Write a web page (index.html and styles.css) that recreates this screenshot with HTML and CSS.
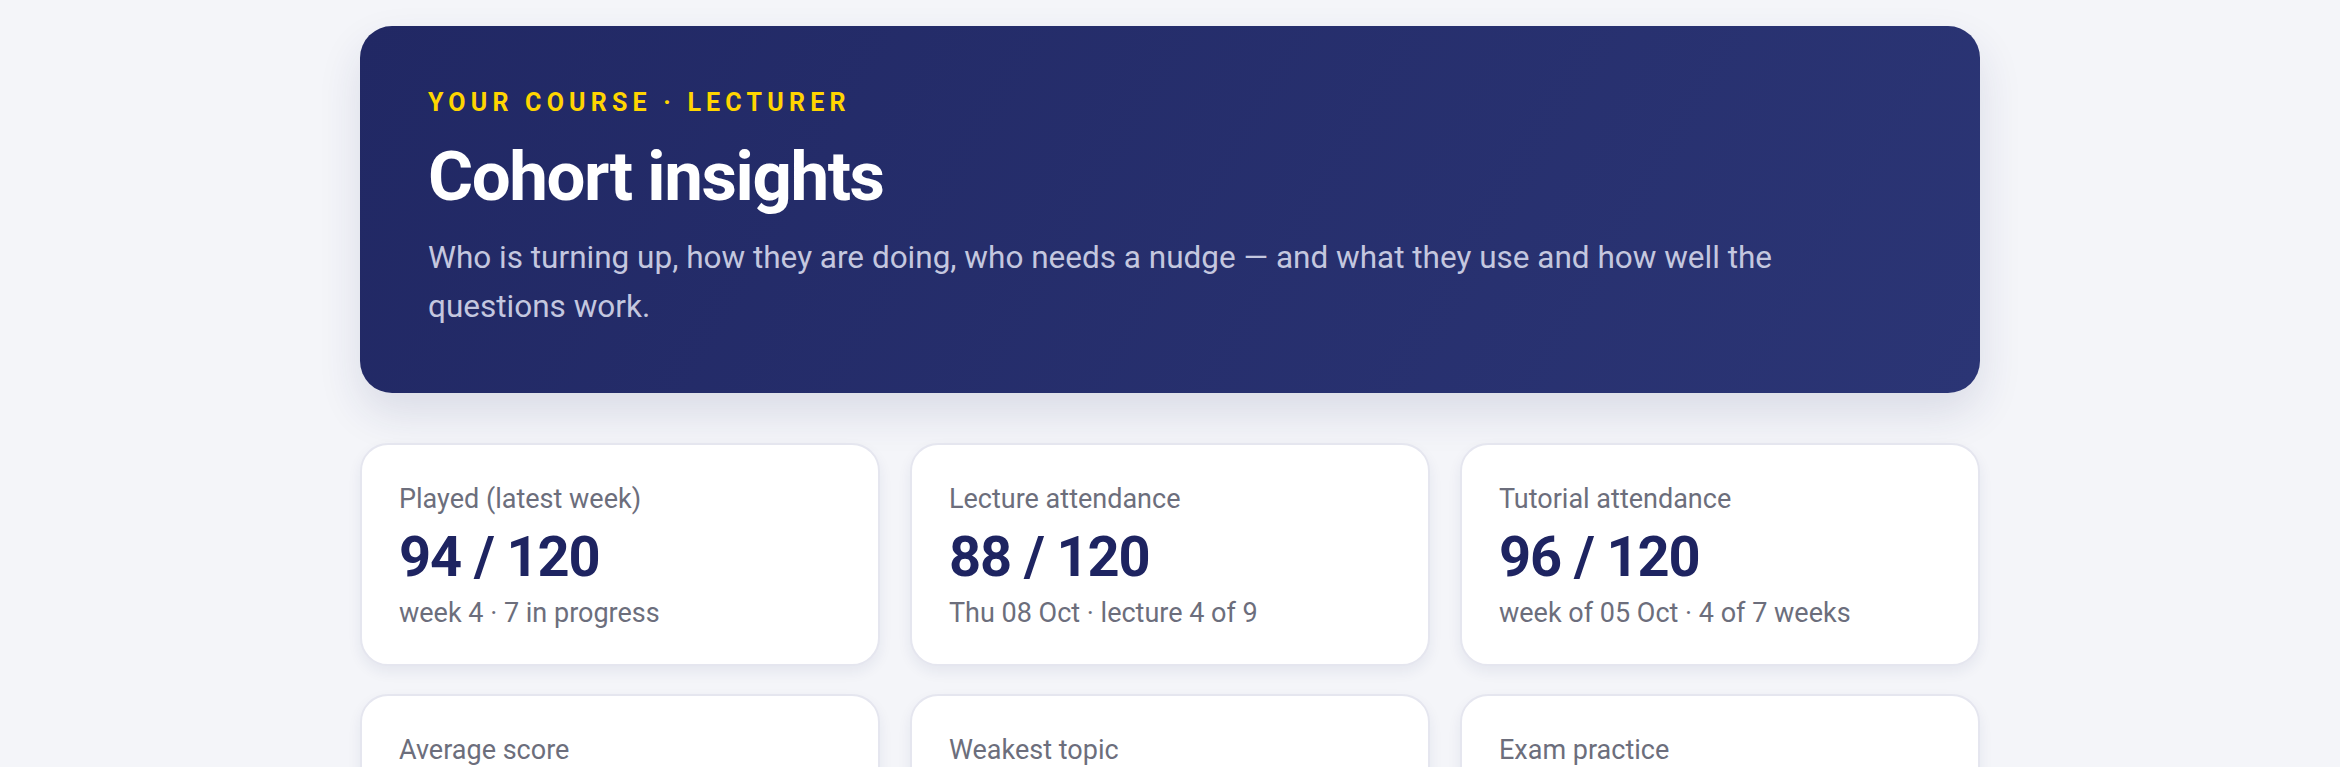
FILE: index.html
```html
<!DOCTYPE html>
<html lang="en">

<head>
    <meta charset="UTF-8">
    <meta name="viewport" content="width=device-width, initial-scale=1.0">
    <title>Cohort insights</title>
    <link rel="stylesheet" href="styles.css">
</head>

<body>
    <div class="page">
        <header class="hero">
            <div class="eyebrow">Your course · Lecturer</div>
            <h1>Cohort insights</h1>
            <p class="lead">Who is turning up, how they are doing, who needs a nudge — and what they use and how well the questions work.</p>
        </header>

        <section class="stats">
            <div class="stat-card">
                <div class="stat-label">Played (latest week)</div>
                <div class="stat-value">94 / 120</div>
                <div class="stat-note">week 4 · 7 in progress</div>
            </div>
            <div class="stat-card">
                <div class="stat-label">Lecture attendance</div>
                <div class="stat-value">88 / 120</div>
                <div class="stat-note">Thu 08 Oct · lecture 4 of 9</div>
            </div>
            <div class="stat-card">
                <div class="stat-label">Tutorial attendance</div>
                <div class="stat-value">96 / 120</div>
                <div class="stat-note">week of 05 Oct · 4 of 7 weeks</div>
            </div>

            <div class="stat-card">
                <div class="stat-label">Average score</div>
                <div class="stat-value">—</div>
                <div class="stat-note">&nbsp;</div>
            </div>
            <div class="stat-card">
                <div class="stat-label">Weakest topic</div>
                <div class="stat-value">—</div>
                <div class="stat-note">&nbsp;</div>
            </div>
            <div class="stat-card">
                <div class="stat-label">Exam practice</div>
                <div class="stat-value">—</div>
                <div class="stat-note">&nbsp;</div>
            </div>
        </section>
    </div>
</body>

</html>
```

FILE: styles.css
```css
body {
    margin: 0;
    font-family: Roboto, "Liberation Sans", Arial, sans-serif;
    background-color: #f4f5f9; /* very light grey-blue page */
    color: #1e2461;
}

.page {
    width: 1620px;
    margin: 0 auto;
    padding-top: 26px;
}

/* dark banner at the top */
.hero {
    background: linear-gradient(120deg, #212864 0%, #2b3575 100%);
    border-radius: 32px;
    padding: 62px 68px 62px;
    box-shadow: 0 20px 44px rgba(33, 40, 100, 0.12);
}

.eyebrow {
    color: #ffd500;
    font-size: 25px;
    font-weight: 700;
    line-height: 30px;
    letter-spacing: 5.2px;
    text-transform: uppercase;
}

.hero h1 {
    margin: 20px 0 0;
    color: #ffffff;
    font-size: 69px;
    font-weight: 700;
    line-height: 77px;
    letter-spacing: -1.4px;
}

.lead {
    margin: 18px 0 0;
    max-width: 1440px;
    color: #c4c7df;
    font-size: 31.5px;
    line-height: 49px;
}

/* stat cards */
.stats {
    display: grid;
    grid-template-columns: repeat(3, 1fr);
    gap: 28px 30px;
    margin-top: 50px;
}

.stat-card {
    background-color: #ffffff;
    border: 2px solid #e5e6ef;
    border-radius: 28px;
    padding: 35px 37px 32px;
    box-shadow: 0 6px 14px rgba(30, 36, 97, 0.07);
}

.stat-label,
.stat-note {
    color: #6c6e7c;
    font-size: 27px;
    line-height: 38px;
}

.stat-value {
    margin-top: 7px;
    color: #1e2461;
    font-size: 56px;
    font-weight: 700;
    line-height: 64px;
    letter-spacing: -1.1px;
}

.stat-note {
    margin-top: 5px;
}
```
